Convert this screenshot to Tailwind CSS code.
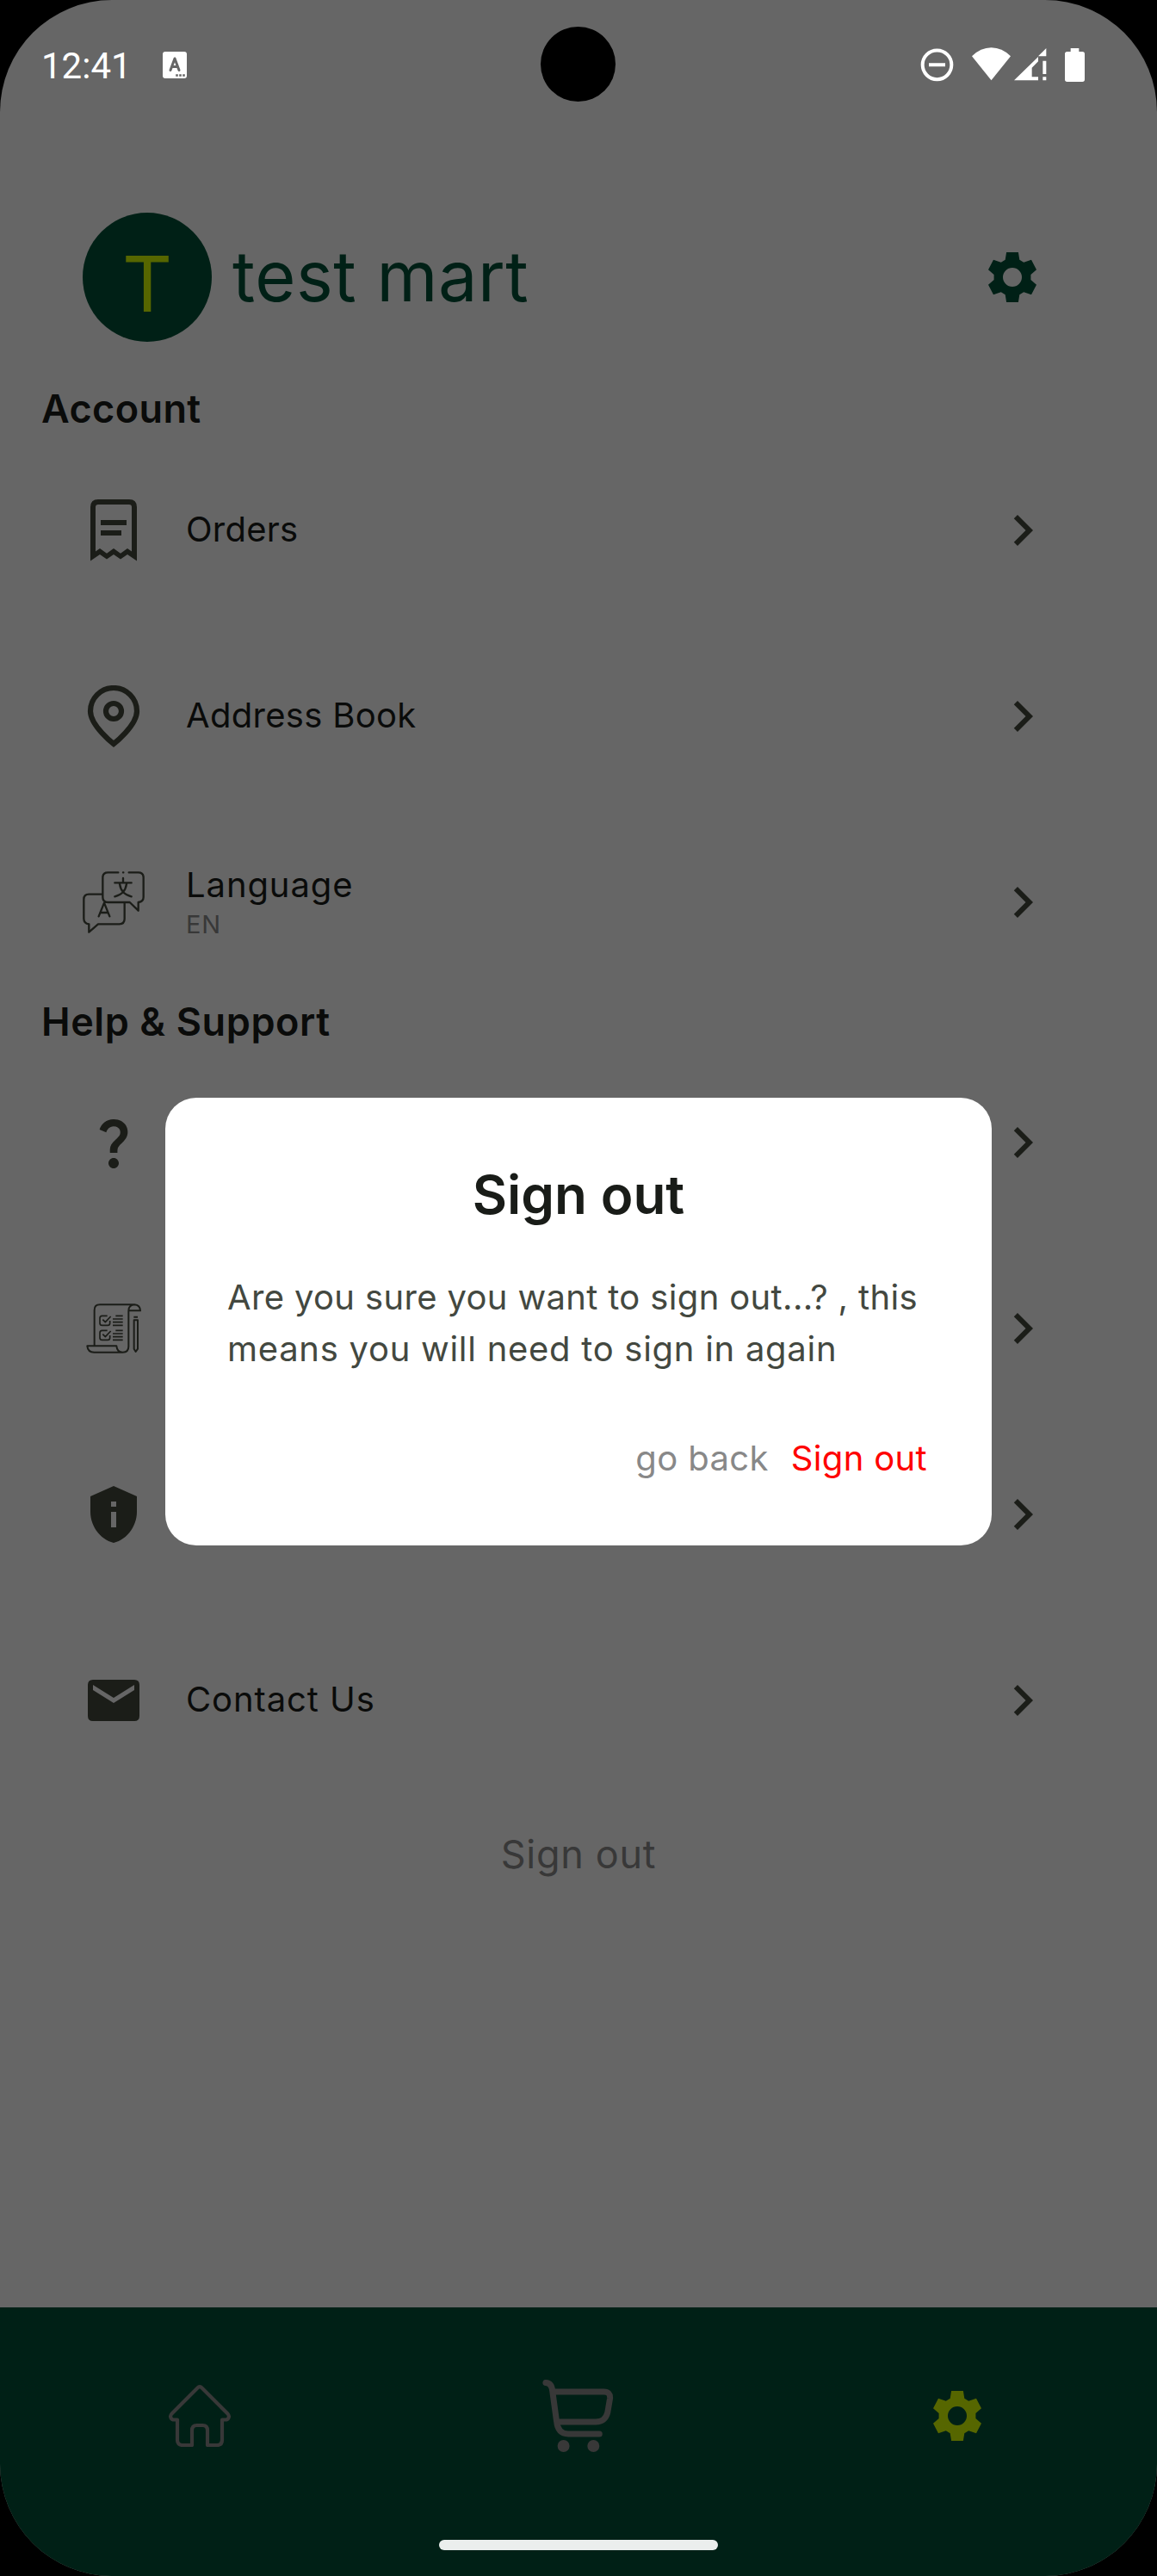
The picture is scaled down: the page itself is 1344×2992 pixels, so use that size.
<!DOCTYPE html>
<html lang="en">
<head>
<meta charset="utf-8">
<title>test mart</title>
<script src="https://cdn.jsdelivr.net/npm/@tailwindcss/browser@4"></script>
</head>
<body class="bg-black">
<svg class="hidden">
  <symbol id="chevron" viewBox="0 0 24 24"><path d="M10 6 8.59 7.41 13.17 12l-4.58 4.59L10 18l6-6z"/></symbol>
  <symbol id="gear" viewBox="-30 -30 60 60"><path fill-rule="evenodd" d="M-6.9-29H6.9L8.3-20.3L13.2-17.3L22-20.2L28-8.7L21.4-3V3L28 8.7L22 20.2L13.2 17.3L8.3 20.3L6.9 29H-6.9L-8.3 20.3L-13.2 17.3L-22 20.2L-28 8.7L-21.4 3V-3L-28-8.7L-22-20.2L-13.2-17.3L-8.3-20.3ZM0-11A11 11 0 1 0 0 11A11 11 0 1 0 0-11Z"/></symbol>
</svg>
<div class="relative flex h-[2992px] w-[1344px] flex-col overflow-hidden rounded-[130px] bg-[#666666] font-['Inter',sans-serif] text-[#0a0b0a]">
  <!-- Status bar -->
  <header class="flex h-[150px] shrink-0 items-center pr-[83px] pl-[48px] text-white">
    <span class="w-[141px] pt-[3px] font-['Roboto',sans-serif] text-[42px] leading-none">12:41</span>
    <svg class="h-[31px] w-[28px]" viewBox="0 0 28 31"><rect width="28" height="31" rx="3" fill="#fff"/><path d="M9 21.500L14 8L19 21.500M10.500 17.500H17.500" fill="none" stroke="#666" stroke-width="3" stroke-linecap="round" stroke-linejoin="round"/><path d="M15.200 26.200h2.600v2.600h-2.600zM19.200 26.200h2.600v2.600h-2.600zM23.200 26.200h2.600v2.600h-2.600z" fill="#666"/></svg>
    <div class="ml-auto flex items-center">
      <svg class="h-10 w-10" viewBox="84 45 120 120" fill="none" stroke="#fff" stroke-width="12"><circle cx="145.500" cy="106" r="50.500"/><path d="M117 106H174"/></svg>
      <svg class="ml-5 h-10 w-[47px]" viewBox="264 45 141 120" fill="#fff"><path d="M267 76Q297 46 334.500 46T402 76L334.500 160Z"/></svg>
      <svg class="ml-0.5 h-10 w-10" viewBox="411 45 120 120" fill="#fff"><path d="M526 48V76H498ZM498 78V94L476 116V148H498V160H414ZM514 92H526V138H514ZM514 148H526V160H514Z"/></svg>
      <svg class="ml-[19px] h-10 w-[25px]" viewBox="588 45 75 120" fill="#fff"><path d="M611 48H640V60H652Q660 60 660 68V157Q660 165 652 165H599Q591 165 591 157V68Q591 60 599 60H611Z"/></svg>
    </div>
  </header>
  <div class="absolute top-[31px] left-[628px] size-[87px] rounded-full bg-black"></div>

  <!-- Store header -->
  <section class="mt-[97px] flex h-[150px] shrink-0 items-center pr-[138px] pl-24 text-[#002016]">
    <div class="flex size-[150px] items-center justify-center rounded-full bg-[#002016] pt-[15px] text-[90px] leading-none text-[#566600]">T</div>
    <h1 class="ml-6 pb-0.5 text-[81px] leading-none tracking-[0.5px]">test mart</h1>
    <svg class="ml-auto size-[60px]" fill="#002016"><use href="#gear"/></svg>
  </section>

  <h2 class="mt-[46px] flex h-[65px] shrink-0 items-center pb-0.5 pl-12 text-[45px] leading-none font-semibold tracking-[0.4px]">Account</h2>
  <ul class="shrink-0">
    <li class="flex h-[216px] items-center pr-[120px] pl-24">
      <svg class="size-[72px]" viewBox="0 0 72 72" fill="#1b1d18"><path fill-rule="evenodd" d="M9 71.500V9Q9 0 18 0H54Q63 0 63 9V71.500L52 64L44 69.500L36 64L28 69.500L20 64ZM15 60.500L20 57L28 62.700L36 57L44 62.700L52 57L57 60.500V9Q57 6 54 6H18Q15 6 15 9ZM21 24H51V30H21ZM21 36H45V42H21Z"/></svg>
      <span class="ml-12 pb-[3px] text-[40px] leading-none tracking-[0.25px]">Orders</span>
      <svg class="ml-auto size-[72px]" fill="#1b1d18"><use href="#chevron"/></svg>
    </li>
    <li class="flex h-[216px] items-center pr-[120px] pl-24">
      <svg class="size-[72px]" viewBox="0 0 72 72" fill="none" stroke="#1b1d18" stroke-width="6.200"><path d="M36 68C36 68 63 47 63 30A27 27 0 0 0 9 30C9 47 36 68 36 68Z"/><circle cx="36" cy="30" r="9"/></svg>
      <span class="ml-12 pb-[3px] text-[40px] leading-none tracking-[0.3px]">Address Book</span>
      <svg class="ml-auto size-[72px]" fill="#1b1d18"><use href="#chevron"/></svg>
    </li>
    <li class="flex h-[216px] items-center pr-[120px] pl-24">
      <svg class="size-[72px]" viewBox="36 36 216 216" fill="none" stroke="#1b1d18" stroke-width="7" stroke-linecap="round" stroke-linejoin="round"><path d="M160 40H124Q106 40 106 58V126Q106 144 124 144H200L230 173V144Q248 142 248 126V58Q248 40 230 40H197M177 40H178M103 116H58Q40 116 40 134V200Q40 218 58 220V248L90 220H164Q182 220 182 202V148M92 193L111 146L130 193M99 180H123M177 60V76M148 76H206M165 80Q170 116 206 124M189 80Q184 116 148 124"/></svg>
      <div class="ml-12 flex flex-col">
        <span class="text-[40px] leading-[50px] tracking-[0.9px]">Language</span>
        <span class="pt-px text-[29px] leading-[40px] tracking-[0.7px] text-[#383838]">EN</span>
      </div>
      <svg class="ml-auto size-[72px]" fill="#1b1d18"><use href="#chevron"/></svg>
    </li>
  </ul>

  <h2 class="flex h-[63px] shrink-0 items-center pb-[3px] pl-12 text-[45px] leading-none font-semibold tracking-[0.6px]">Help &amp; Support</h2>
  <ul class="shrink-0">
    <li class="flex h-[216px] items-center pr-[120px] pl-24">
      <svg class="size-[72px]" viewBox="0 0 24 24" fill="#1b1d18"><path d="M11.070 12.850c.77-1.390 2.250-2.210 3.110-3.440.91-1.290.4-3.700-2.180-3.700-1.690 0-2.520 1.280-2.870 2.340L6.540 6.960C7.250 4.830 9.180 3 11.990 3c2.350 0 3.960 1.070 4.780 2.410.7 1.150 1.110 3.300.03 4.900-1.200 1.770-2.350 2.310-2.970 3.450-.25.46-.35.76-.35 2.240h-2.890c-.01-.78-.13-2.050.48-3.150zM14 20c0 1.100-.9 2-2 2s-2-.9-2-2 .9-2 2-2 2 .9 2 2z"/></svg>
      <svg class="ml-auto size-[72px]" fill="#1b1d18"><use href="#chevron"/></svg>
    </li>
    <li class="flex h-[216px] items-center pr-[120px] pl-24">
      <svg class="size-[72px]" viewBox="36 51 216 216" fill="none" stroke="#1b1d18" stroke-width="6" stroke-linejoin="round"><path d="M77 218V95Q77 76 96 76H217Q236 78 237 97H197M217 76Q196 78 196 97V222Q196 242 176 242T154 220H52Q54 242 76 242H176M214 119H228M215 130H228V230L221 240L215 230Z"/><path stroke-width="5" d="M122 115H104Q96 115 96 123V140Q96 148 104 148H123Q131 148 131 140V132M106 128L115 137L134 117M122 166H104Q96 166 96 174V191Q96 199 104 199H123Q131 199 131 191V183M106 179L115 188L134 168M151 115H176M141 126H176M141 137H176M141 148H176M151 166H176M141 177H176M141 188H176M141 199H176"/></svg>
      <svg class="ml-auto size-[72px]" fill="#1b1d18"><use href="#chevron"/></svg>
    </li>
    <li class="flex h-[216px] items-center pr-[120px] pl-24">
      <svg class="size-[72px]" viewBox="0 0 24 24" fill="#1b1d18"><path fill-rule="evenodd" d="M12 1L3 5v6c0 5.550 3.840 10.740 9 12 5.160-1.260 9-6.450 9-12V5l-9-4zm-1 6h2v2h-2V7zm0 4h2v6h-2v-6z"/></svg>
      <svg class="ml-auto size-[72px]" fill="#1b1d18"><use href="#chevron"/></svg>
    </li>
    <li class="flex h-[216px] items-center pr-[120px] pl-24">
      <svg class="size-[72px]" viewBox="0 0 24 24" fill="#1b1d18"><path fill-rule="evenodd" d="M4 4H20Q22 4 22 6V18Q22 20 20 20H4Q2 20 2 18V6Q2 4 4 4ZM4 6V8L12 13L20 8V6L12 11Z"/></svg>
      <span class="ml-12 pb-[3px] text-[40px] leading-none tracking-[0.9px]">Contact Us</span>
      <svg class="ml-auto size-[72px]" fill="#1b1d18"><use href="#chevron"/></svg>
    </li>
  </ul>
  <button class="mt-[40px] h-[60px] shrink-0 self-center text-[45px] leading-none tracking-[0.7px] text-[#383838]">Sign out</button>

  <!-- Bottom navigation -->
  <nav class="mt-auto flex h-[312px] shrink-0 items-start bg-[#002016] pr-[202px] pl-[196px]">
    <div class="flex h-[252px] w-full items-center">
      <svg class="size-[72px]" viewBox="0 0 72 72" fill="none" stroke="#383838" stroke-width="4.200" stroke-linejoin="round"><path d="M33.500 3.500Q36 .8 38.500 3.500L68.500 33.500C71.500 37 69 40.500 66 40.500H62V64Q62 70 56 70H45V53Q45 47 39.500 47H32.500Q27 47 27 53V70H16Q10 70 10 64V40.500H6C3 40.500 .5 37 3.500 33.500Z"/></svg>
      <svg class="ml-[362px] size-[84px]" viewBox="0 0 84 84" fill="none" stroke="#383838" stroke-width="7" stroke-linecap="round" stroke-linejoin="round"><path d="M3.900 3.500Q11 4 11.700 13L16.500 48Q18 63 30 63H66.300M12.500 14H71.500Q79 14 78.600 21.500L75.800 38Q73 49 62 49H17.200"/><g fill="#383838" stroke="none"><circle cx="24.600" cy="77" r="7"/><circle cx="59.300" cy="77" r="7"/></g></svg>
      <svg class="ml-auto size-[60px]" fill="#566600"><use href="#gear"/></svg>
    </div>
  </nav>
  <div class="absolute top-[2950px] left-[510px] h-3 w-[324px] rounded-full bg-[#ebeeed]"></div>

  <!-- Sign-out dialog -->
  <div class="absolute top-[1275px] left-48 flex h-[520px] w-[960px] flex-col rounded-[36px] bg-white px-[72px]">
    <h3 class="mt-[81px] text-center text-[62px] leading-[64px] font-semibold text-[#191c18]">Sign out</h3>
    <p class="mt-[57px] text-[40px] leading-[60px] whitespace-nowrap text-[#434840]"><span class="tracking-[0.35px]">Are you sure you want to sign out...? , this</span><br><span class="tracking-[0.72px]">means you will need to sign in again</span></p>
    <div class="mt-[67px] flex justify-end gap-[26px] pr-[3px] text-[40px] leading-[60px] tracking-[0.35px]">
      <button class="text-[#888888]">go back</button>
      <button class="text-[#ff0000]">Sign out</button>
    </div>
  </div>
</div>
</body>
</html>
